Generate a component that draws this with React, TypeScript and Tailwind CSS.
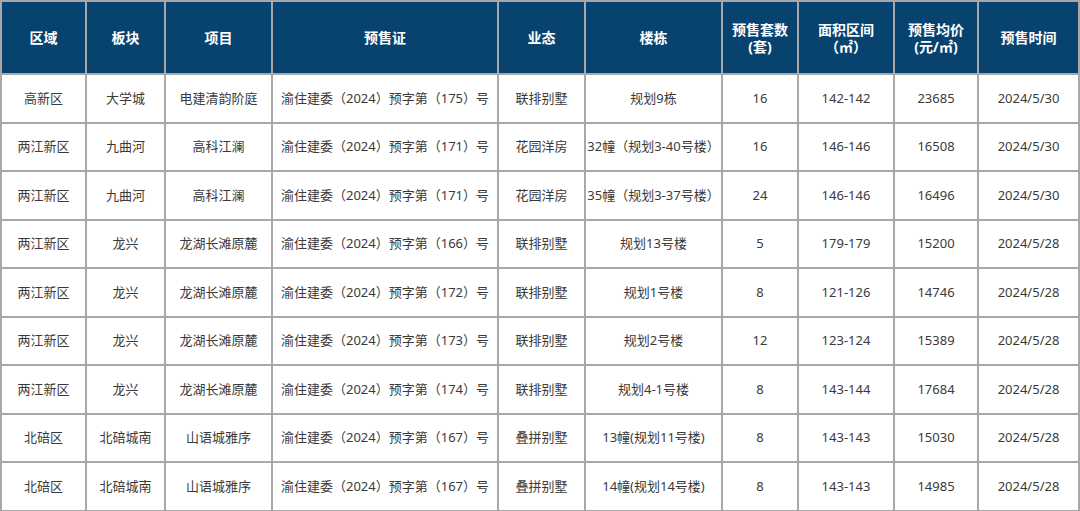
import React from 'react';

type Row = {
  area: string;
  block: string;
  project: string;
  cert: string;
  type: string;
  building: string;
  units: string;
  size: string;
  price: string;
  date: string;
};

const rows: Row[] = [
  { area: '高新区', block: '大学城', project: '电建清韵阶庭', cert: '渝住建委（2024）预字第（175）号', type: '联排别墅', building: '规划9栋', units: '16', size: '142-142', price: '23685', date: '2024/5/30' },
  { area: '两江新区', block: '九曲河', project: '高科江澜', cert: '渝住建委（2024）预字第（171）号', type: '花园洋房', building: '32幢（规划3-40号楼）', units: '16', size: '146-146', price: '16508', date: '2024/5/30' },
  { area: '两江新区', block: '九曲河', project: '高科江澜', cert: '渝住建委（2024）预字第（171）号', type: '花园洋房', building: '35幢（规划3-37号楼）', units: '24', size: '146-146', price: '16496', date: '2024/5/30' },
  { area: '两江新区', block: '龙兴', project: '龙湖长滩原麓', cert: '渝住建委（2024）预字第（166）号', type: '联排别墅', building: '规划13号楼', units: '5', size: '179-179', price: '15200', date: '2024/5/28' },
  { area: '两江新区', block: '龙兴', project: '龙湖长滩原麓', cert: '渝住建委（2024）预字第（172）号', type: '联排别墅', building: '规划1号楼', units: '8', size: '121-126', price: '14746', date: '2024/5/28' },
  { area: '两江新区', block: '龙兴', project: '龙湖长滩原麓', cert: '渝住建委（2024）预字第（173）号', type: '联排别墅', building: '规划2号楼', units: '12', size: '123-124', price: '15389', date: '2024/5/28' },
  { area: '两江新区', block: '龙兴', project: '龙湖长滩原麓', cert: '渝住建委（2024）预字第（174）号', type: '联排别墅', building: '规划4-1号楼', units: '8', size: '143-144', price: '17684', date: '2024/5/28' },
  { area: '北碚区', block: '北碚城南', project: '山语城雅序', cert: '渝住建委（2024）预字第（167）号', type: '叠拼别墅', building: '13幢(规划11号楼)', units: '8', size: '143-143', price: '15030', date: '2024/5/28' },
  { area: '北碚区', block: '北碚城南', project: '山语城雅序', cert: '渝住建委（2024）预字第（167）号', type: '叠拼别墅', building: '14幢(规划14号楼)', units: '8', size: '143-143', price: '14985', date: '2024/5/28' },
];

const widths = [85, 79, 107, 226, 87, 137, 76, 96, 84, 101];

export default function App() {
  const th = 'border-2 border-[#a8a8a8] px-0 text-center align-middle font-bold text-white text-[14px] leading-[17px]';
  const td = 'border-2 border-[#a8a8a8] px-0 text-center align-middle text-[13px] text-[#3a3a3a] whitespace-nowrap';

  return (
    <div className="w-[1080px] h-[511px] bg-white" style={{ fontFamily: '"Noto Sans", "Noto Sans CJK SC", sans-serif' }}>
      <table className="border-collapse table-fixed w-[1078px] bg-white">
        <colgroup>
          {widths.map((w, i) => (
            <col key={i} style={{ width: w }} />
          ))}
        </colgroup>
        <thead>
          <tr className="h-[73px] bg-[#08436f]">
            <th className={th}>区域</th>
            <th className={th}>板块</th>
            <th className={th}>项目</th>
            <th className={th}>预售证</th>
            <th className={th}>业态</th>
            <th className={th}>楼栋</th>
            <th className={th}>预售套数<br />(套)</th>
            <th className={th}>面积区间<br />（㎡）</th>
            <th className={th}>预售均价<br />(元/㎡)</th>
            <th className={th}>预售时间</th>
          </tr>
        </thead>
        <tbody>
          {rows.map((r, i) => (
            <tr key={i} className="h-[48.5px]">
              <td className={td}>{r.area}</td>
              <td className={td}>{r.block}</td>
              <td className={td}>{r.project}</td>
              <td className={td}>{r.cert}</td>
              <td className={td}>{r.type}</td>
              <td className={td}>{r.building}</td>
              <td className={td}>{r.units}</td>
              <td className={td}>{r.size}</td>
              <td className={td}>{r.price}</td>
              <td className={td}>{r.date}</td>
            </tr>
          ))}
        </tbody>
      </table>
    </div>
  );
}
